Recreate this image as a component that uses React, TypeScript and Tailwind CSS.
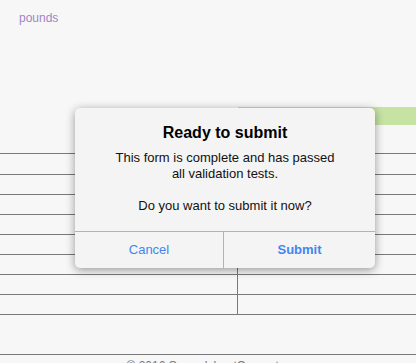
const rows = [21, 20, 20, 20, 20, 20, 20, 20];

const ConfirmDialog = () => {
  return (
    <div className="absolute left-[75px] top-[108px] w-[300px] rounded-[5px] bg-[#f4f4f4] shadow-[0_2px_10px_rgba(0,0,0,0.4)]">
      <h2 className="pt-[15px] text-center text-[16px] font-bold leading-[19px] text-black">Ready to submit</h2>
      <div className="mt-[8px] pb-[17px] text-center text-[13px] leading-[16px] text-[#111]">
        <p>This form is complete and has passed</p>
        <p>all validation tests.</p>
        <p className="mt-[16px]">Do you want to submit it now?</p>
      </div>
      <div className="grid grid-cols-[149px_1fr] border-t border-[#b3b3b3]">
        <button className="h-[36px] border-r border-[#b3b3b3] text-[13px] text-[#3f87f2]">Cancel</button>
        <button className="h-[36px] text-[13px] font-bold text-[#3f87f2]">Submit</button>
      </div>
    </div>
  );
};

export default function App() {
  return (
    <div className="relative min-h-[363px] w-full overflow-hidden bg-[#f7f7f7] font-['Liberation_Sans',Arial,sans-serif]">
      <p className="pl-[19px] pt-[11px] text-[12px] leading-[15px] text-[#a184c9]">pounds</p>

      <div className="mt-[81px] grid grid-cols-[238px_1fr]">
        <div className="h-[18px]" />
        <div className="h-[18px] bg-[#c6e3a4]" />
      </div>
      <div className="h-[28px]" />

      <div className="border-b border-[#7a7a7a]">
        {rows.map((h, i) => (
          <div key={i} className="grid grid-cols-[238px_1fr] border-t border-[#7a7a7a]" style={{ height: h }}>
            <div className="border-r border-[#7a7a7a]" />
            <div />
          </div>
        ))}
      </div>

      <footer className="mt-[39px] border-t border-[#7a7a7a] pt-[4px] text-center text-[12px] leading-[15px] text-[#777]">
        © 2016 SpreadsheetConverter
      </footer>

      <ConfirmDialog />
    </div>
  );
}
